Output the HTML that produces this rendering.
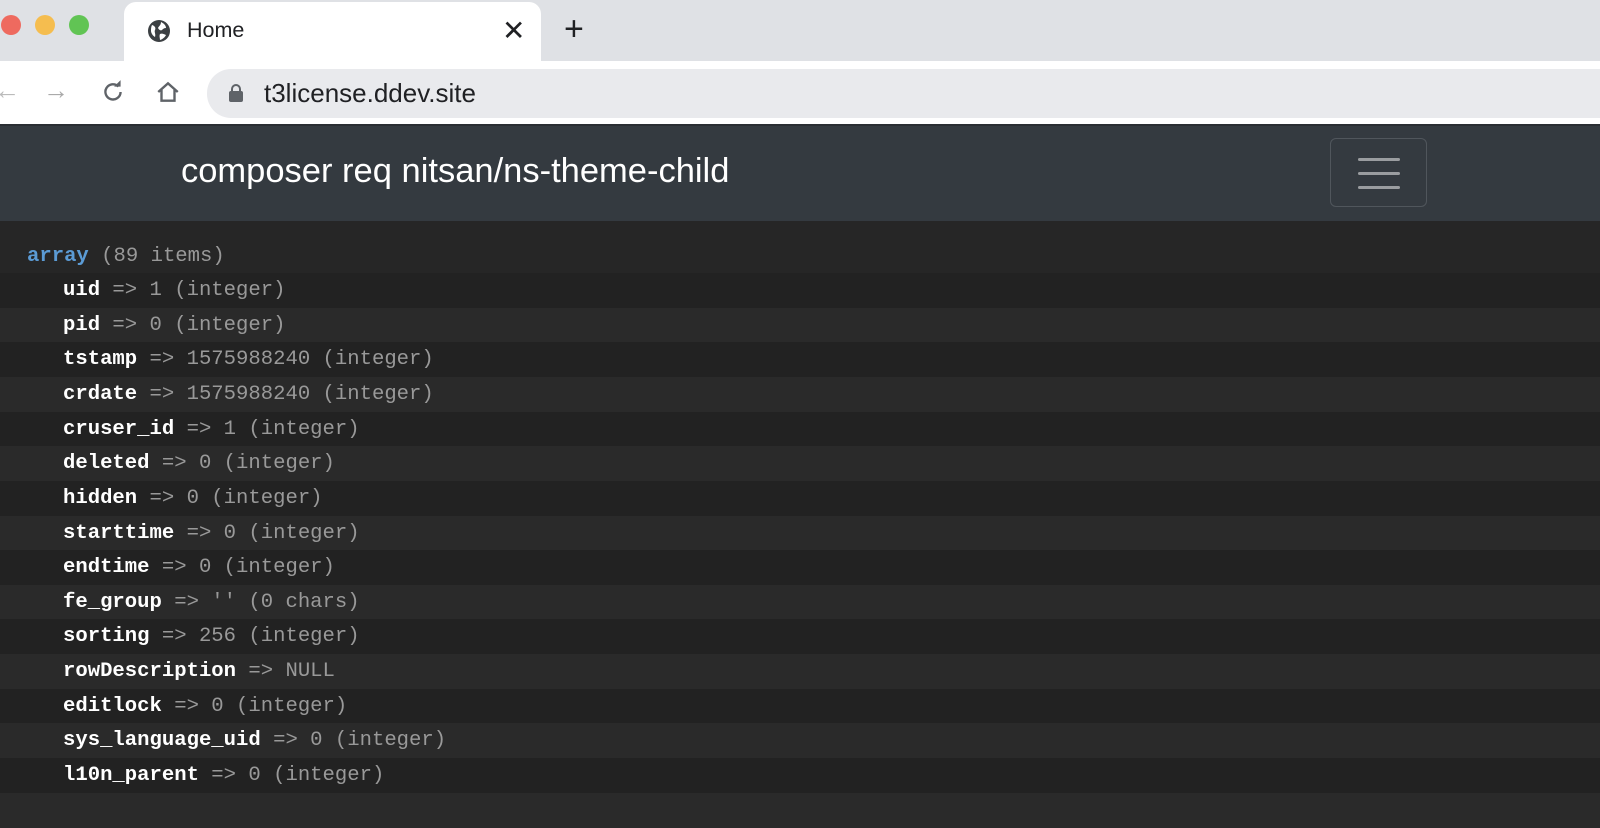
<!DOCTYPE html>
<html><head><meta charset="utf-8"><style>
*{margin:0;padding:0;box-sizing:border-box}
body{width:1600px;height:801px;overflow:hidden;background:#262626;font-family:"Liberation Sans",sans-serif;position:relative}
.tabs{position:absolute;left:0;top:0;width:1600px;height:61px;background:#dfe1e5}
.dot{position:absolute;top:15px;width:20px;height:20px;border-radius:50%}
.tab{position:absolute;left:124px;top:2px;width:417px;height:59px;background:#fff;border-radius:12px 12px 0 0}
.toolbar{position:absolute;left:0;top:61px;width:1600px;height:63px;background:#fff}
.addr{position:absolute;left:207px;top:69px;width:1420px;height:49px;background:#e9eaed;border-radius:24px}
.nav{position:absolute;left:0;top:124px;width:1600px;height:97px;background:#343a40;border-top:2px solid #2a2e33}
.title{position:absolute;left:181px;top:152px;color:#fff;font-size:34.5px}
.burger{position:absolute;left:1330px;top:138px;width:97px;height:69px;border:1px solid #50565c;border-radius:6px}
.burger i{position:absolute;left:27px;width:42px;height:3px;background:#9a9da0;border-radius:2px}
.row{position:absolute;left:0;width:1600px;height:35px;font-family:"Liberation Mono",monospace;font-size:20.6px;line-height:35px;color:#999}
.row b{color:#fff}
.d{background:#222}
.l{background:#2a2a2a}
</style></head><body>
<div class="tabs">
<div class="dot" style="left:1px;background:#ee6a5f"></div>
<div class="dot" style="left:35px;background:#f5bd4f"></div>
<div class="dot" style="left:69px;background:#61c454"></div>
<div class="tab">
<svg style="position:absolute;left:23px;top:17px" width="24" height="24" viewBox="0 0 24 24"><circle cx="12" cy="12" r="11" fill="#3c4043"/><path d="M5 6c3 1 4 3 3 5s1 4 0 7c-2-1-4-4-4-6s0-4 1-6zM14 3c2 1 5 3 5 6-2 0-3 1-4 2s-3 0-4-2c1-2 3-3 3-6zM13 15c2-1 4 0 6 1-1 2-3 4-6 5 0-2-1-4 0-6z" fill="#fff"/></svg>
<span style="position:absolute;left:63px;top:16px;font-size:21.5px;color:#202124">Home</span>
<span style="position:absolute;left:378px;top:12px;font-size:28px;color:#202124">✕</span>
</div>
<span style="position:absolute;left:564px;top:10px;font-size:34px;color:#202124">+</span>
</div>
<div class="toolbar">
<span style="position:absolute;left:-6px;top:14px;font-size:26px;color:#bbb">←</span>
<span style="position:absolute;left:43px;top:14px;font-size:26px;color:#aaa">→</span>
<svg style="position:absolute;left:100px;top:18px" width="26" height="26" viewBox="0 0 24 24"><path d="M19 12a7 7 0 1 1-2-5" fill="none" stroke="#5f6368" stroke-width="2.2"/><path d="M13 7h6V1z" fill="#5f6368"/></svg>
<svg style="position:absolute;left:155px;top:18px" width="26" height="26" viewBox="0 0 24 24"><path d="M3 12L12 4l9 8M6 10v10h12V10" fill="none" stroke="#5f6368" stroke-width="2.2"/></svg>
</div>
<div class="addr">
<svg style="position:absolute;left:21px;top:14px" width="16" height="20" viewBox="0 0 16 20"><path d="M4 9V6a4 4 0 0 1 8 0v3" fill="none" stroke="#5f6368" stroke-width="2"/><rect x="1" y="8" width="14" height="11" rx="2" fill="#5f6368"/></svg>
<span style="position:absolute;left:57px;top:9px;font-size:26px;color:#202124">t3license.ddev.site</span>
</div>
<div class="nav"></div>
<div class="title">composer req nitsan/ns-theme-child</div>
<div class="burger"><i style="top:19px"></i><i style="top:33px"></i><i style="top:47px"></i></div>
<div class="row" style="top:239px;padding-left:27px"><b style="color:#5b9bd5">array</b> (89 items)</div>
<div class="row d" style="top:273px;padding-left:63px"><b>uid</b> =&gt; 1 (integer)</div>
<div class="row l" style="top:308px;padding-left:63px"><b>pid</b> =&gt; 0 (integer)</div>
<div class="row d" style="top:342px;padding-left:63px"><b>tstamp</b> =&gt; 1575988240 (integer)</div>
<div class="row l" style="top:377px;padding-left:63px"><b>crdate</b> =&gt; 1575988240 (integer)</div>
<div class="row d" style="top:412px;padding-left:63px"><b>cruser_id</b> =&gt; 1 (integer)</div>
<div class="row l" style="top:446px;padding-left:63px"><b>deleted</b> =&gt; 0 (integer)</div>
<div class="row d" style="top:481px;padding-left:63px"><b>hidden</b> =&gt; 0 (integer)</div>
<div class="row l" style="top:516px;padding-left:63px"><b>starttime</b> =&gt; 0 (integer)</div>
<div class="row d" style="top:550px;padding-left:63px"><b>endtime</b> =&gt; 0 (integer)</div>
<div class="row l" style="top:585px;padding-left:63px"><b>fe_group</b> =&gt; '' (0 chars)</div>
<div class="row d" style="top:619px;padding-left:63px"><b>sorting</b> =&gt; 256 (integer)</div>
<div class="row l" style="top:654px;padding-left:63px"><b>rowDescription</b> =&gt; NULL</div>
<div class="row d" style="top:689px;padding-left:63px"><b>editlock</b> =&gt; 0 (integer)</div>
<div class="row l" style="top:723px;padding-left:63px"><b>sys_language_uid</b> =&gt; 0 (integer)</div>
<div class="row d" style="top:758px;padding-left:63px"><b>l10n_parent</b> =&gt; 0 (integer)</div>
<div class="row l" style="top:793px;padding-left:63px"></div>
</body></html>
